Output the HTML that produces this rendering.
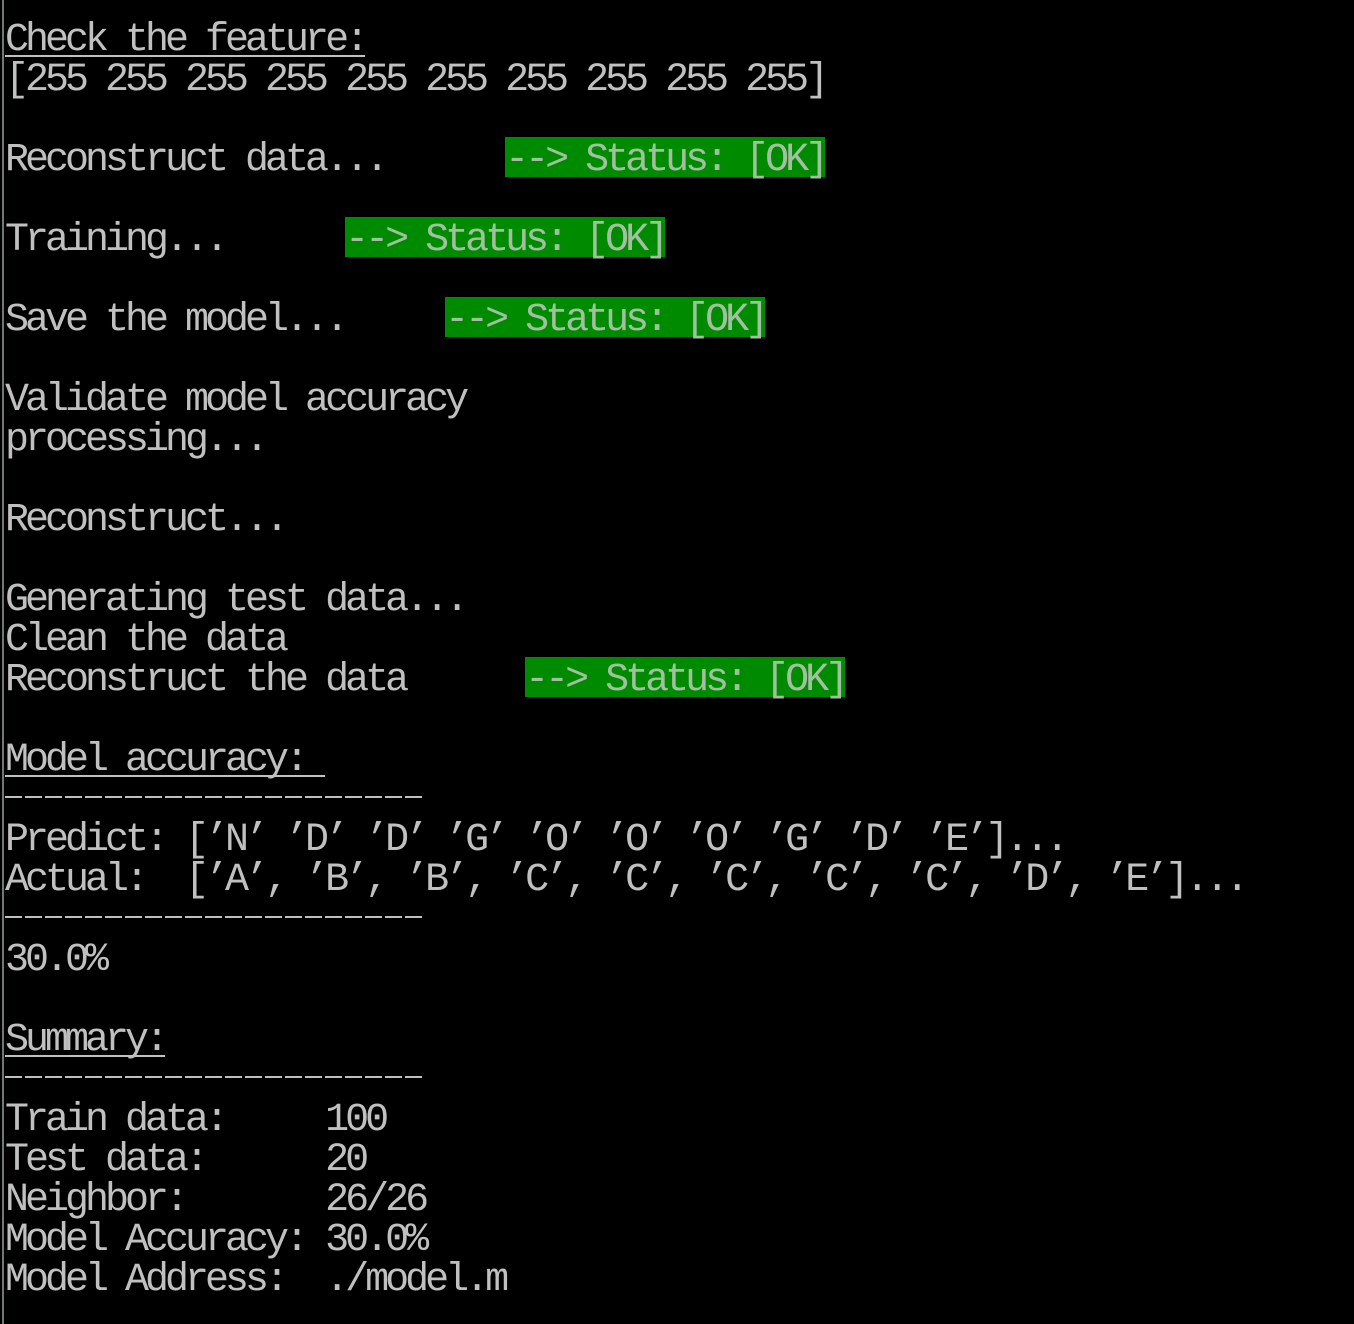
<!DOCTYPE html>
<html><head><meta charset="utf-8"><style>
html,body{margin:0;padding:0;background:#000;width:1354px;height:1324px;overflow:hidden;position:relative}
.bar{position:absolute;left:2px;top:0;width:2px;height:1324px;background:#6b7a72}
.l{position:absolute;left:5px;height:40px;line-height:48px;white-space:pre;font-family:"Liberation Mono",monospace;font-size:40px;letter-spacing:-4px;color:#c0c0c0}
.u{border-bottom:2px solid #c0c0c0;display:inline-block;height:38px;line-height:48px;vertical-align:top}
.g{background:#008a00;color:#a0c0a0;display:inline-block;height:40px;line-height:48px;vertical-align:top}
.d{position:absolute;left:5px;height:2px;width:418px;background:repeating-linear-gradient(90deg,#c0c0c0 0 17px,transparent 17px 20px)}
</style></head><body>
<div class="bar"></div>
<div class="l" style="top:17px"><span class="u">Check the feature:</span></div>
<div class="l" style="top:57px">[255 255 255 255 255 255 255 255 255 255]</div>
<div class="l" style="top:137px">Reconstruct data...      <span class="g">--&gt; Status: [OK]</span></div>
<div class="l" style="top:217px">Training...      <span class="g">--&gt; Status: [OK]</span></div>
<div class="l" style="top:297px">Save the model...     <span class="g">--&gt; Status: [OK]</span></div>
<div class="l" style="top:377px">Validate model accuracy</div>
<div class="l" style="top:417px">processing...</div>
<div class="l" style="top:497px">Reconstruct...</div>
<div class="l" style="top:577px">Generating test data...</div>
<div class="l" style="top:617px">Clean the data</div>
<div class="l" style="top:657px">Reconstruct the data      <span class="g">--&gt; Status: [OK]</span></div>
<div class="l" style="top:737px"><span class="u">Model accuracy: </span></div>
<div class="d" style="top:796px"></div>
<div class="l" style="top:817px">Predict: [’N’ ’D’ ’D’ ’G’ ’O’ ’O’ ’O’ ’G’ ’D’ ’E’]...</div>
<div class="l" style="top:857px">Actual:  [’A’, ’B’, ’B’, ’C’, ’C’, ’C’, ’C’, ’C’, ’D’, ’E’]...</div>
<div class="d" style="top:916px"></div>
<div class="l" style="top:937px">30.0%</div>
<div class="l" style="top:1017px"><span class="u">Summary:</span></div>
<div class="d" style="top:1076px"></div>
<div class="l" style="top:1097px">Train data:     100</div>
<div class="l" style="top:1137px">Test data:      20</div>
<div class="l" style="top:1177px">Neighbor:       26/26</div>
<div class="l" style="top:1217px">Model Accuracy: 30.0%</div>
<div class="l" style="top:1257px">Model Address:  ./model.m</div>
</body></html>
